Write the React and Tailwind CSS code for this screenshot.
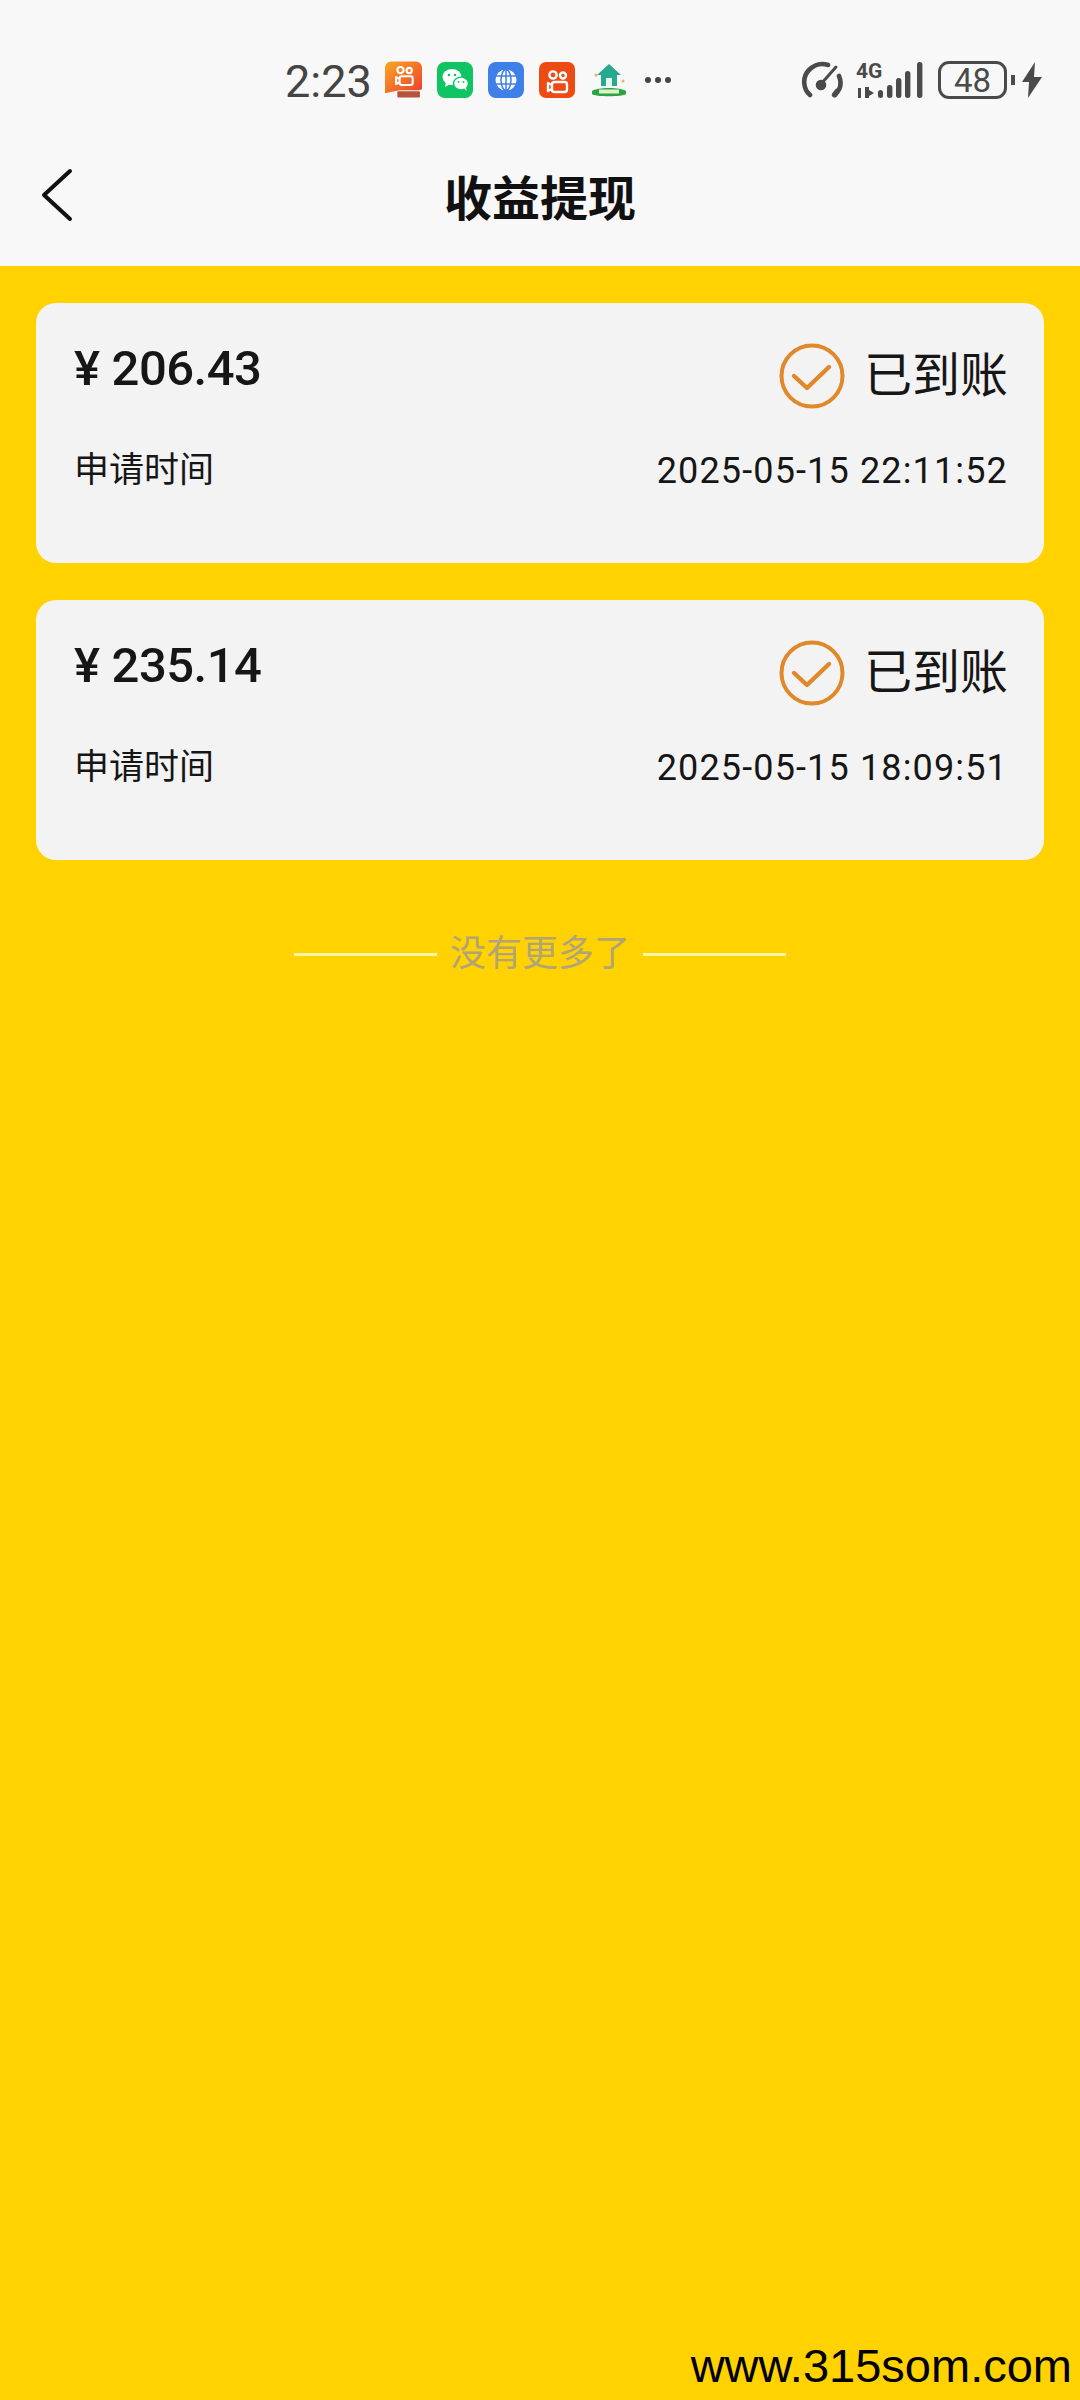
import React from 'react';

const RECORDS = [
  { amount: '206.43', time: '2025-05-15 22:11:52' },
  { amount: '235.14', time: '2025-05-15 18:09:51' },
];

const sans = "font-['Roboto','Noto_Sans_CJK_SC',sans-serif]";

// Kuaishou style camera mark, shared by the two orange icons
function CameraMark() {
  return (
    <g fill="none" stroke="#fff" strokeWidth="2.4">
      <circle cx="13" cy="11" r="3.6" />
      <circle cx="23" cy="11.5" r="3" />
      <rect x="12" y="18" width="15" height="10" rx="2.5" />
      <path d="M12 21l-4-2v8l4-2" strokeLinejoin="round" />
    </g>
  );
}

function AppIcons() {
  return (
    <div className="flex items-center gap-[15px] ml-[13px]">
      <svg width="37" height="38" viewBox="0 0 36 36">
        <defs>
          <linearGradient id="ks" x1="0" y1="0" x2="1" y2="1">
            <stop offset="0" stopColor="#f7a823" />
            <stop offset="1" stopColor="#ee3d2c" />
          </linearGradient>
        </defs>
        <path d="M6 0h24a6 6 0 016 6v21l-3 1H14L0 31V6a6 6 0 016-6z" fill="url(#ks)" />
        <g transform="translate(4 -1) scale(0.85)"><CameraMark /></g>
        <rect x="12" y="29" width="22" height="6" rx="1" fill="#b5543a" />
      </svg>
      <svg width="36" height="36" viewBox="0 0 36 36">
        <rect width="36" height="36" rx="8" fill="#0fc463" />
        <ellipse cx="15" cy="15" rx="9.5" ry="8" fill="#fff" />
        <path d="M9 20l-1 5 5-3z" fill="#fff" />
        <ellipse cx="24" cy="21.5" rx="7.5" ry="6.4" fill="#fff" stroke="#0fc463" strokeWidth="1.4" />
        <path d="M27 26l2.5 3-.5-4.5z" fill="#fff" />
        <circle cx="12" cy="13" r="1.3" fill="#0fc463" />
        <circle cx="18" cy="13" r="1.3" fill="#0fc463" />
        <circle cx="21.5" cy="20" r="1" fill="#0fc463" />
        <circle cx="26.5" cy="20" r="1" fill="#0fc463" />
      </svg>
      <svg width="36" height="36" viewBox="0 0 36 36">
        <rect width="36" height="36" rx="8" fill="#3f7fe8" />
        <circle cx="18" cy="18" r="10.5" fill="#fff" />
        <g fill="none" stroke="#3f7fe8" strokeWidth="1.5">
          <ellipse cx="18" cy="18" rx="5" ry="10.5" />
          <path d="M8 14h20M8 22h20M18 7v22" />
        </g>
      </svg>
      <svg width="36" height="36" viewBox="0 0 36 36">
        <rect width="36" height="36" rx="7" fill="#ee4a14" />
        <g transform="translate(1 2)"><CameraMark /></g>
      </svg>
      <svg width="38" height="38" viewBox="0 0 38 38">
        <circle cx="6" cy="14" r="1.5" fill="#e3b85a" />
        <circle cx="33" cy="20" r="1.5" fill="#e3b85a" />
        <path d="M19 3L7 14h4v11h16V14h4z" fill="#27a98f" />
        <rect x="16" y="17" width="6" height="8" fill="#e6f5ef" />
        <path d="M2 30c5-4 29-4 34 0v3c-2 3-32 3-34 0z" fill="#2fa33e" />
        <rect x="9" y="28.5" width="20" height="4" fill="#d9f2cf" />
      </svg>
      <div className="flex items-center gap-[4px] ml-[2px]">
        <span className="w-[6px] h-[6px] rounded-full bg-[#444]" />
        <span className="w-[6px] h-[6px] rounded-full bg-[#444]" />
        <span className="w-[6px] h-[6px] rounded-full bg-[#444]" />
      </div>
    </div>
  );
}

function SystemIcons() {
  return (
    <div className="flex items-center">
      <svg width="42" height="38" viewBox="0 0 42 38" fill="none" stroke="#4a4a4a" strokeWidth="4.6" strokeLinecap="round" strokeLinejoin="round">
        <path d="M9 34C2 28 1 16 8 9c6-6 13-7 19-5" />
        <path d="M38 15c3 7 1 14-4 19" />
        <path d="M33 34l3-4" />
        <path d="M20 23L35 6" strokeWidth="3" />
        <circle cx="20" cy="24" r="3" fill="#4a4a4a" />
      </svg>
      <div className="relative w-[67px] h-[38px] ml-[14px]">
        <span className="absolute left-[-1px] top-[1px] text-[21px] leading-[19px] font-bold text-[#4a4a4a] font-['Roboto',sans-serif]">4G</span>
        <svg className="absolute left-0 top-0" width="67" height="38" viewBox="0 0 67 38" fill="#4a4a4a">
          <rect x="1" y="27" width="3" height="10" />
          <rect x="8" y="26" width="4" height="11" />
          <path d="M12 29l5 3-5 3z" />
          <rect x="21" y="29" width="5" height="8" rx="2.5" />
          <rect x="30" y="24" width="5.4" height="13" rx="2.7" />
          <rect x="39" y="17" width="5.4" height="20" rx="2.7" />
          <rect x="48" y="10" width="5.4" height="27" rx="2.7" />
          <rect x="60" y="1" width="5.4" height="36" rx="2.7" />
        </svg>
      </div>
      <div className="w-[69px] h-[38px] ml-[14px] rounded-[11px] border-[3px] border-[#4a4a4a] flex items-center justify-center text-[33px] leading-none text-[#4a4a4a] font-['Roboto',sans-serif]">48</div>
      <span className="w-[4px] h-[10px] ml-[4px] bg-[#4a4a4a]" />
      <svg className="ml-[7px]" width="20" height="36" viewBox="0 0 20 36" fill="#4a4a4a">
        <path d="M13 0L0 20h7L6 36l14-21h-8z" />
      </svg>
    </div>
  );
}

function RecordCard({ amount, time }) {
  return (
    <div className="h-[260px] rounded-[20px] bg-[#f3f3f3] pl-[38px] pr-[36px] pt-[40px] text-[#161616]">
      <div className="flex justify-between items-start h-[66px]">
        <div className={`${sans} text-[49px] leading-[52px] font-medium tracking-[-0.5px] flex`}>
          <span className="mr-[12px]">¥</span>
          <span>{amount}</span>
        </div>
        <div className="flex items-center">
          <svg width="66" height="66" viewBox="0 0 66 66" fill="none" stroke="#e0882a">
            <circle cx="33" cy="33" r="30.5" strokeWidth="4" />
            <path d="M15 33l13 12 22-21" strokeWidth="4.4" strokeLinecap="round" strokeLinejoin="round" />
          </svg>
          <span className={`${sans} ml-[19px] text-[48px] leading-[66px]`}>已到账</span>
        </div>
      </div>
      <div className="flex justify-between items-center mt-[37px] h-[50px]">
        <span className={`${sans} text-[35px]`}>申请时间</span>
        <span className={`${sans} text-[36px] tracking-[1.15px]`}>{time}</span>
      </div>
    </div>
  );
}

export default function App() {
  return (
    <div className="relative w-[1080px] h-[2400px] bg-[#ffd200] overflow-hidden">
      <header className="h-[266px] bg-[#f8f8f8]">
        <div className="h-[140px] pt-[61px] pl-[285px] pr-[38px] flex justify-between items-start">
          <div className="flex items-center h-[37px]">
            <span className="text-[45px] leading-none text-[#444] mt-[3px] font-['Roboto',sans-serif]">2:23</span>
            <AppIcons />
          </div>
          <SystemIcons />
        </div>
        <div className="relative h-[120px] flex items-center justify-center">
          <svg className="absolute left-[40px] top-[28px]" width="34" height="54" viewBox="0 0 34 54" fill="none" stroke="#111" strokeWidth="4" strokeLinecap="round" strokeLinejoin="round">
            <path d="M30 3L4 27l26 24" />
          </svg>
          <h1 className={`${sans} text-[48px] font-bold text-[#111]`}>收益提现</h1>
        </div>
      </header>

      <main className="px-[36px] pt-[37px] flex flex-col gap-[37px]">
        {RECORDS.map((r) => (
          <RecordCard key={r.time} amount={r.amount} time={r.time} />
        ))}
      </main>

      <div className="flex items-center justify-center mt-[64px] h-[60px]">
        <span className="w-[143px] h-[3px] bg-[#fff6a8]" />
        <span className={`${sans} mx-[13px] text-[36px] text-[#b0a478]`}>没有更多了</span>
        <span className="w-[143px] h-[3px] bg-[#fff6a8]" />
      </div>

      <div className="absolute right-[8px] bottom-[11px] text-[47px] leading-none text-black font-['Liberation_Sans',sans-serif]">
        www.315som.com
      </div>
    </div>
  );
}
